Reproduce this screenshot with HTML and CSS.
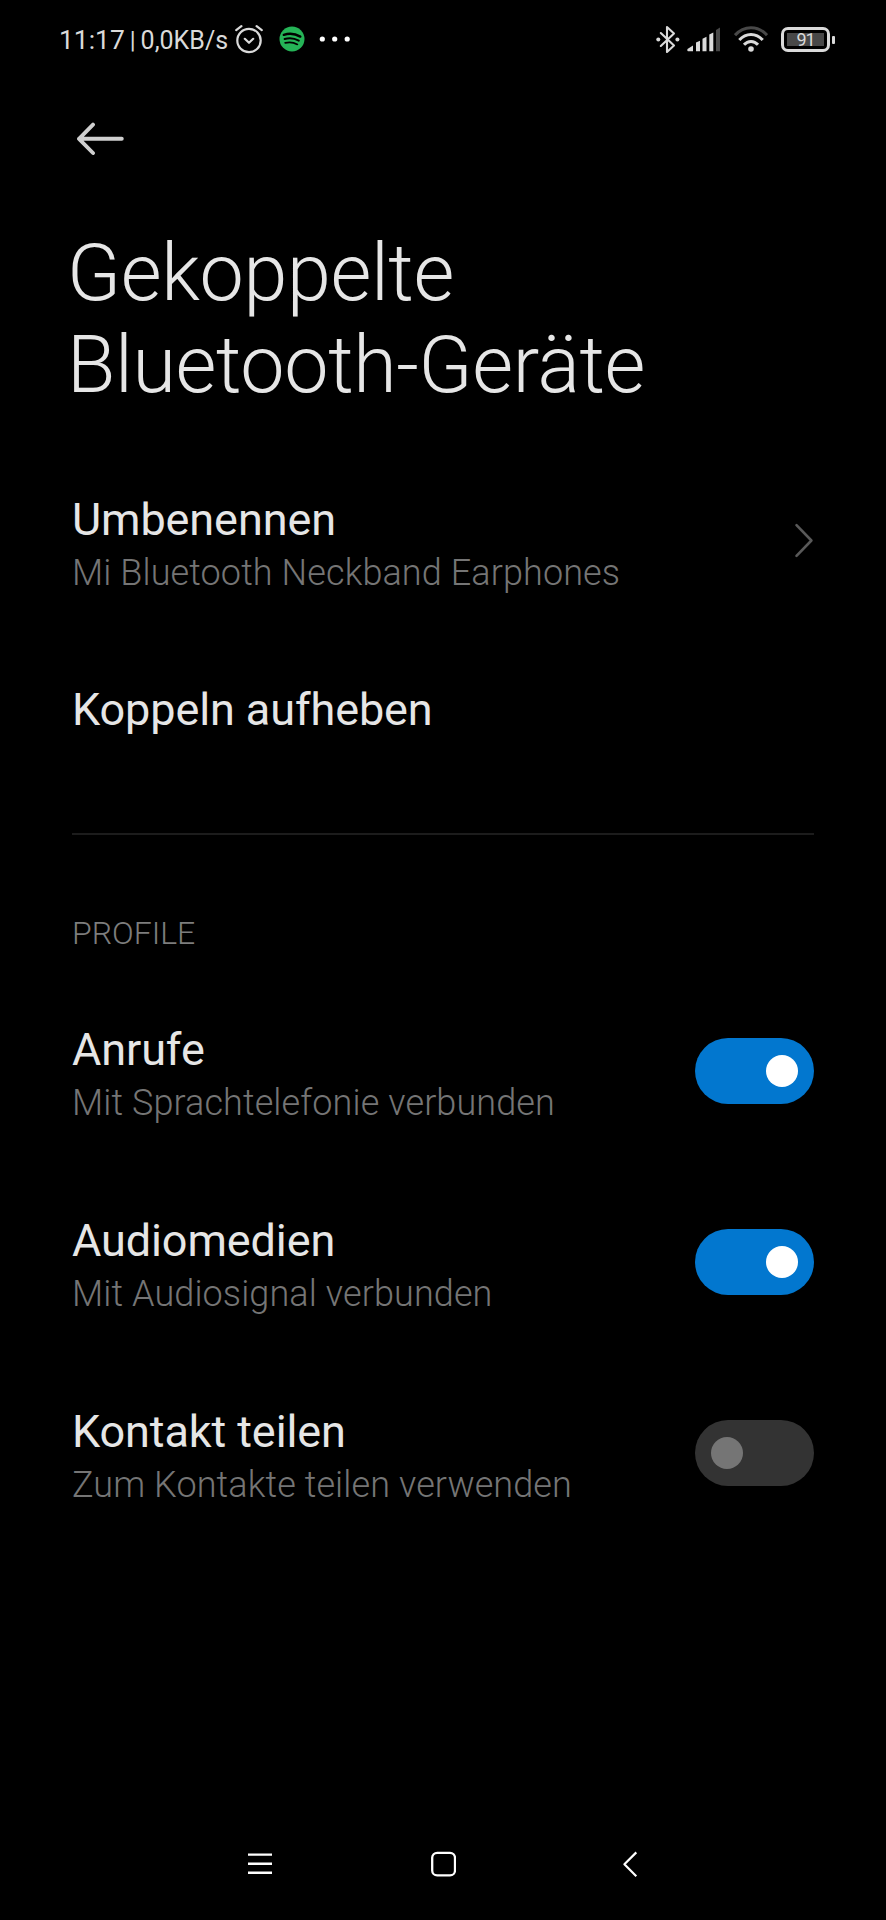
FILE: index.html
```
<!DOCTYPE html>
<html lang="de">
<head>
  <meta charset="UTF-8" />
  <meta name="viewport" content="width=device-width, initial-scale=1.0"/>
  <title>Gekoppelte Bluetooth-Geräte</title>
  <link rel="stylesheet" href="styles.css">
</head>
<body>
  <div class="screen">
    <div class="status-bar">
      <div class="status-left">
        <span class="time">11:17</span><span class="sep">|</span><span class="speed">0,0KB/s</span>
        <svg class="alarm" width="30" height="30" viewBox="0 0 30 30" fill="none" stroke="#dadada" stroke-width="2.2" stroke-linecap="round" stroke-linejoin="round">
          <circle cx="15" cy="16.5" r="11.7"/>
          <path d="M2.2 6.2 L7.4 2.2 M22.6 2.2 L27.8 6.2 M10.8 14.8 L15 18.8 L19.2 14.8"/>
        </svg>
        <svg class="spotify" width="26" height="26" viewBox="0 0 26 26" fill="none" stroke="#000" stroke-linecap="round">
          <circle cx="13" cy="13" r="12.5" fill="#25b457" stroke="none"/>
          <path d="M4.8 8.8 C10 7.2 16.5 7.8 21.3 10.6" stroke-width="2.4"/>
          <path d="M5.6 13 C10.4 11.6 15.6 12.3 19.8 14.6" stroke-width="2"/>
          <path d="M6.2 16.9 C10.4 15.8 14.8 16.4 18.4 18.4" stroke-width="1.7"/>
        </svg>
        <svg class="more" width="32" height="6" viewBox="0 0 32 6" fill="#fff">
          <circle cx="3.3" cy="3" r="2.6"/><circle cx="15.7" cy="3" r="2.6"/><circle cx="28.2" cy="3" r="2.6"/>
        </svg>
      </div>
      <div class="status-right">
        <svg class="bt" width="24" height="29" viewBox="0 0 24 29" fill="none" stroke="#dadada" stroke-width="2.1" stroke-linejoin="round" stroke-linecap="round">
          <path d="M4.8 8 L18 20.6 L11 27 V2 L18 8.4 L4.8 21"/>
          <circle cx="2.3" cy="14.5" r="2" fill="#dadada" stroke="none"/>
          <circle cx="21.4" cy="14.5" r="2" fill="#dadada" stroke="none"/>
        </svg>
        <svg class="signal" width="34" height="25" viewBox="0 0 34 25" fill="#dadada">
          <path d="M0.5 22 L6 18.6 V24.3 H1.2 Q0.3 24.3 0.3 23 Z"/>
          <path d="M9 15.6 L13 13.8 V24.3 H9 Z"/>
          <path d="M15.5 11.7 L19.5 9.7 V24.3 H15.5 Z"/>
          <path d="M22.3 7.6 L26.3 5.4 V24.3 H22.3 Z"/>
          <path d="M29 3 L33 0.6 V24.3 H29 Z" fill="#484848"/>
        </svg>
        <svg class="wifi" width="34" height="27" viewBox="0 0 34 27" fill="none" stroke="#dadada" stroke-width="3">
          <path d="M1 9.2 C10 -0.8 24 -0.8 33 9.2" stroke="#484848"/>
          <path d="M5.3 14 C12 6.6 22 6.6 28.7 14"/>
          <path d="M10 18.8 C14 14.4 20 14.4 24 18.8"/>
          <circle cx="17" cy="23" r="2.8" fill="#dadada" stroke="none"/>
        </svg>
        <div class="battery"><span class="battery-level">91</span></div>
      </div>
    </div>

    <div class="app-bar">
      <svg width="48" height="34" viewBox="0 0 48 34" fill="none" stroke="#cfcfcf" stroke-width="3.9" stroke-linecap="round" stroke-linejoin="round">
        <path d="M45.8 16.8 H3 M17 2.6 L3 16.8 L17 31"/>
      </svg>
    </div>

    <h1>Gekoppelte<br>Bluetooth-Geräte</h1>

    <div class="row">
      <div class="row-text">
        <div class="row-title">Umbenennen</div>
        <div class="row-sub">Mi Bluetooth Neckband Earphones</div>
      </div>
      <svg class="chevron" width="20" height="36" viewBox="0 0 20 36" fill="none" stroke="#595959" stroke-width="2.6" stroke-linecap="round" stroke-linejoin="round">
        <path d="M2.5 2.2 L17.4 17.5 L2.5 32.8"/>
      </svg>
    </div>
    <div class="row single">
      <div class="row-title">Koppeln aufheben</div>
    </div>

    <hr>
    <h2>PROFILE</h2>

    <div class="row">
      <div class="row-text">
        <div class="row-title">Anrufe</div>
        <div class="row-sub">Mit Sprachtelefonie verbunden</div>
      </div>
      <div class="switch on"><span class="knob"></span></div>
    </div>
    <div class="row">
      <div class="row-text">
        <div class="row-title">Audiomedien</div>
        <div class="row-sub">Mit Audiosignal verbunden</div>
      </div>
      <div class="switch on"><span class="knob"></span></div>
    </div>
    <div class="row">
      <div class="row-text">
        <div class="row-title">Kontakt teilen</div>
        <div class="row-sub">Zum Kontakte teilen verwenden</div>
      </div>
      <div class="switch"><span class="knob"></span></div>
    </div>

    <div class="nav-bar">
      <svg width="24" height="26" viewBox="0 0 24 26" stroke="#fff" stroke-width="2.4">
        <path d="M0 3.6 H24 M0 12.8 H24 M0 21.8 H24"/>
      </svg>
      <svg class="home" width="26" height="26" viewBox="0 0 26 26" fill="none" stroke="#fff" stroke-width="2.3">
        <rect x="2.2" y="1.8" width="22.8" height="22.6" rx="5"/>
      </svg>
      <svg class="back" width="16" height="26" viewBox="0 0 16 26" fill="none" stroke="#fff" stroke-width="2.2" stroke-linejoin="round">
        <path d="M14.3 1.4 L2.4 13.3 L14.3 25.2"/>
      </svg>
    </div>
  </div>
</body>
</html>
```
FILE: styles.css
```
* {
  box-sizing: border-box;
}

body {
  font-family: Roboto, sans-serif;
  background: #000;
  color: #e6e6e6;
  margin: 0;
}

svg {
  display: block;
  flex-shrink: 0;
}

.screen {
  display: flex;
  flex-direction: column;
  width: 886px;
  height: 1920px;
}

.status-bar {
  display: flex;
  justify-content: space-between;
  align-items: center;
  height: 78px;
  padding: 0 51px 0 59px;
  color: #dadada;
}

.status-left,
.status-right {
  display: flex;
  align-items: center;
}

.time,
.sep,
.speed {
  padding-top: 2px;
}

.time {
  font-size: 26.4px;
}

.sep {
  font-size: 24px;
  margin: 0 5px;
}

.speed {
  font-size: 25px;
}

.alarm {
  margin-left: 6px;
}

.spotify {
  margin-left: 15px;
}

.more {
  margin-left: 14px;
}

.signal {
  margin-left: 7px;
}

.wifi {
  margin-left: 13px;
}

.battery {
  position: relative;
  display: flex;
  width: 49px;
  height: 25px;
  margin: 0 5px 0 13px;
  padding: 3px;
  border: 3px solid #dadada;
  border-radius: 7px;
}

.battery::after {
  content: "";
  position: absolute;
  right: -8px;
  top: 6px;
  width: 3px;
  height: 8px;
  border-radius: 1px;
  background: #dadada;
}

.battery-level {
  flex: 1;
  background: #484848;
  font-size: 18px;
  letter-spacing: -1px;
  line-height: 14px;
  text-align: center;
}

.app-bar {
  height: 149px;
  padding: 44px 0 0 76px;
}

h1 {
  margin: 0;
  height: 218px;
  padding-left: 67px;
  font-size: 79px;
  font-weight: 300;
  letter-spacing: -0.35px;
  line-height: 92px;
}

.row {
  display: flex;
  align-items: center;
  justify-content: space-between;
  height: 191px;
  padding: 0 72px;
}

.row.single {
  height: 148px;
}

.row-text {
  padding-top: 12px;
}

.row-title {
  font-size: 45px;
  letter-spacing: -0.1px;
  line-height: 52px;
}

.row-sub {
  font-size: 36px;
  font-weight: 300;
  letter-spacing: 0.1px;
  line-height: 54px;
  color: #757575;
}

hr {
  width: 742px;
  height: 2px;
  margin: 49px 72px 0;
  border: none;
  background: #1c1c1c;
}

h2 {
  height: 140px;
  margin: 0;
  padding: 78px 72px 0;
  font-size: 32px;
  font-weight: 300;
  line-height: 40px;
  color: #7d7d7d;
}

.switch {
  display: flex;
  align-items: center;
  width: 119px;
  height: 66px;
  padding: 0 16px;
  border-radius: 33px;
  background: #333;
}

.switch.on {
  justify-content: flex-end;
  background: #0277cf;
}

.knob {
  width: 32px;
  height: 32px;
  border-radius: 50%;
  background: #757575;
}

.on .knob {
  background: #fff;
}

.nav-bar {
  display: flex;
  align-items: center;
  margin-top: auto;
  height: 112px;
  padding-left: 248px;
}

.home {
  margin-left: 158px;
}

.back {
  margin-left: 166px;
}
```
